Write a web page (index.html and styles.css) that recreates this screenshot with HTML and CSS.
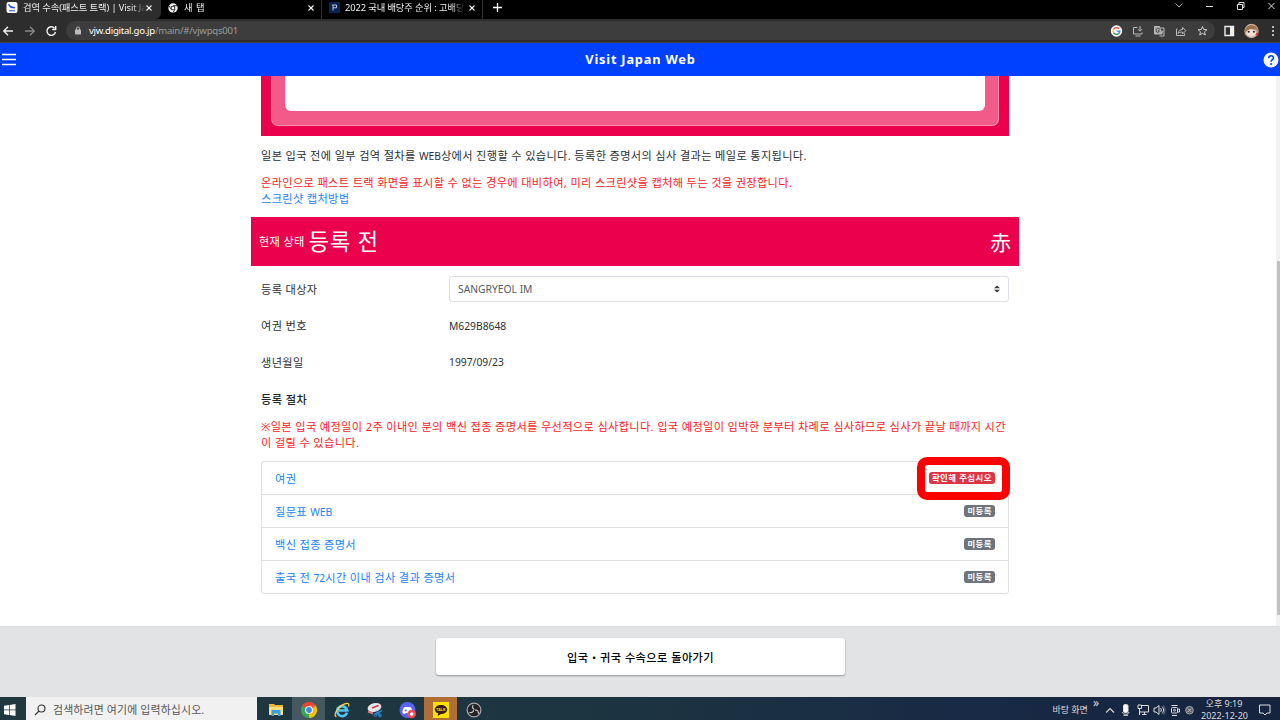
FILE: index.html
```html
<!DOCTYPE html>
<html lang="ko">
<head>
<meta charset="utf-8">
<title>Visit Japan Web</title>
<link rel="stylesheet" href="styles.css">
</head>
<body>
<div class="tabs">
  <div class="tab tab-active">
    <svg class="fav" width="12" height="12" viewBox="0 0 12 12"><rect x=".5" width="11" height="11" rx="2" fill="#fff"/><path d="M2.500 2.500l2 2 4.500 1.300-4-.3z" fill="#1456d8" stroke="#1456d8" stroke-width="1.200"/><path d="M3 8.800h6" stroke="#1456d8"/></svg>
    <span class="tab-text t1">검역 수속(패스트 트랙) | Visit Ja</span>
    <svg class="x" viewBox="0 0 6 6"><path d="M.5.5l5 5M5.500.5l-5 5"/></svg>
  </div>
  <div class="tab tab-two">
    <svg class="fav" width="10" height="10" viewBox="0 0 10 10"><circle cx="5" cy="5" r="4.700" fill="#eee"/><path d="M5 2.700h4.200M3 6.100L1 2.700M7 6.100L5 9.600" stroke="#111" stroke-width=".8"/><circle cx="5" cy="5" r="2.300" fill="#111"/><circle cx="5" cy="5" r="1.500" fill="#fff"/></svg>
    <span class="tab-text t2">새 탭</span>
    <svg class="x" viewBox="0 0 6 6"><path d="M.5.5l5 5M5.500.5l-5 5"/></svg>
  </div>
  <div class="tab tab-three">
    <svg class="fav" width="11" height="11" viewBox="0 0 11 11"><rect width="11" height="11" fill="#0a2354"/><path d="M4 8.500V3M3 3h4.500v2.800H4" fill="none" stroke="#b9c4d6"/></svg>
    <span class="tab-text t3">2022 국내 배당주 순위 : 고배당</span>
    <svg class="x" viewBox="0 0 6 6"><path d="M.5.5l5 5M5.500.5l-5 5"/></svg>
  </div>
  <svg class="plus" width="9" height="9" viewBox="0 0 9 9"><path d="M4.500 0v9M0 4.500h9" stroke="#fff" stroke-width="1.300"/></svg>
  <svg class="winctl" width="100" height="12" viewBox="0 0 100 12" fill="none" stroke="#ddd"><path d="M.5 3.500l3.500 3.500L7.500 3.500" stroke="#aaa"/><path d="M31 6.500h7"/><path d="M62.500 4.500h5v5h-5zM64 4V2.500h5v5h-1.500"/><path d="M93.500 3l6 6M99.500 3l-6 6"/></svg>
</div>
<div class="toolbar">
  <svg class="nav" width="58" height="14" viewBox="0 0 58 14" fill="none" stroke="#f1f1f1" stroke-width="1.400"><path d="M13 7H4M8 2.800L3.800 7 8 11.200"/><path d="M25 7h9M30 2.800L34.200 7 30 11.200" stroke="#85878a"/><path d="M54.500 4.200A4.300 4.300 0 1 0 55.500 8M55.700 2v3.500h-3.500"/></svg>
  <div class="omni">
    <svg width="8" height="9" viewBox="0 0 8 9"><rect x="1" y="3.500" width="6" height="5" rx=".7" fill="#bbb"/><path d="M2.500 4V2.500a1.500 1.500 0 0 1 3 0V4" fill="none" stroke="#bbb"/></svg>
    <span class="url"><b>vjw.digital.go.jp</b>/main/#/vjwpqs001</span>
    <svg class="omni-icons" width="100" height="14" viewBox="0 0 100 14" fill="none" stroke="#bbb">
      <circle cx="6.500" cy="7" r="5.700" fill="#fff" stroke="none"/><path d="M9 4.700A3.300 3.300 0 0 0 3.800 5.200" stroke="#ea4335" stroke-width="1.400"/><path d="M3.700 5.200a3.300 3.300 0 0 0 0 3.600" stroke="#fbbc04" stroke-width="1.400"/><path d="M3.700 8.800a3.300 3.300 0 0 0 4.800.8" stroke="#34a853" stroke-width="1.400"/><path d="M6.500 7.100h3.300a3.300 3.300 0 0 1-1.300 2.500" stroke="#4285f4" stroke-width="1.400"/>
      <path d="M27.500 3.500H23.500v6.500h8.500V8.500M25.500 12h5M30 2v5M28 5.200l2 2 2-2"/>
      <path d="M44.500 2.500h5l2.500 7.500h-7.500z" fill="#aaa"/><path d="M50.500 4h3.500v8h-4.500"/><path d="M50 5.800A2 2 0 1 0 49 8V6.500h-1" stroke="#3d3d3d" stroke-width=".8"/><path d="M51.500 7h2M53 7l-1 2.500" stroke-width=".8"/>
      <path d="M67.500 5h-1v6.500h8v-2M68 9.500c.5-3 2.500-4 4.500-4V3.300l3.300 3.400-3.300 3.300V8c-2 0-3.500.4-4.500 1.500z"/>
      <path d="M92.500 2.500l1.200 3 3.300.2-2.500 2.100.8 3.200-2.800-1.700-2.800 1.700.8-3.200L88 5.700l3.300-.2z" stroke="#ccc"/>
    </svg>
  </div>
  <svg class="right-icons" width="56" height="16" viewBox="0 0 56 16"><path d="M5 3.500h8.500v9H5z" fill="none" stroke="#eee" stroke-width="1.400"/><path d="M10 3h4v10h-4z" fill="#eee"/><circle cx="31.500" cy="8" r="7.200" fill="#c8ab92"/><path d="M25 9c-.5-9 13.500-9 13 0l-2-3-3 .7-4-.2z" fill="#98714f"/><ellipse cx="31.300" cy="10" rx="5" ry="3.700" fill="#f2dfd4"/><circle cx="28.700" cy="8.800" r="1" fill="#33221f"/><circle cx="33.900" cy="8.800" r="1" fill="#33221f"/><path d="M36 12l2-2" stroke="#d33" stroke-width="2"/><g fill="#eee"><circle cx="53" cy="4" r="1"/><circle cx="53" cy="8" r="1"/><circle cx="53" cy="12" r="1"/></g></svg>
</div>
<header class="site-head">
  <svg width="16" height="14" viewBox="0 0 16 14"><path d="M2 1.500h14M2 6.500h14M2 11.500h14" stroke="#fff" stroke-width="1.300"/></svg>
  <h1>Visit Japan Web</h1>
  <svg width="17" height="16" viewBox="0 0 17 16"><circle cx="8" cy="8" r="7.500" fill="#fff"/><path d="M5.700 6.200C5.700 3 10.500 3 10.500 6c0 1.700-2.400 1.800-2.400 3.700" fill="none" stroke="#0041ff" stroke-width="1.600"/><circle cx="8.100" cy="11.900" r="1" fill="#0041ff"/></svg>
</header>
<div class="viewport">
  <main class="page">
    <div class="qr"><div class="qr-mid"><div class="qr-in"></div></div></div>
    <p class="p1">일본 입국 전에 일부 검역 절차를 <span class="lat">WEB</span>상에서 진행할 수 있습니다. 등록한 증명서의 심사 결과는 메일로 통지됩니다.</p>
    <p class="p2 red">온라인으로 패스트 트랙 화면을 표시할 수 없는 경우에 대비하여, 미리 스크린샷을 캡처해 두는 것을 권장합니다.<br><a>스크린샷 캡처방법</a></p>
    <div class="status"><span class="st-label">현재 상태</span><span class="st-val">등록 전</span><span class="st-color">赤</span></div>
    <div class="row first"><span class="lab">등록 대상자</span><div class="select"><span class="lat">SANGRYEOL IM</span><svg width="6" height="8" viewBox="0 0 6 8"><path d="M0 3.300L3 .5l3 2.800zM0 4.700L3 7.500l3-2.800z" fill="#343a40"/></svg></div></div>
    <div class="row"><span class="lab">여권 번호</span><span class="lat">M629B8648</span></div>
    <div class="row"><span class="lab">생년월일</span><span class="lat">1997/09/23</span></div>
    <div class="row"><span class="lab strong">등록 절차</span></div>
    <p class="p3 red">※일본 입국 예정일이 2주 이내인 분의 백신 접종 증명서를 우선적으로 심사합니다. 입국 예정일이 임박한 분부터 차례로 심사하므로 심사가 끝날 때까지 시간<br>이 걸릴 수 있습니다.</p>
    <div class="list">
      <div class="item"><a>여권</a><span class="badge danger">확인해 주십시오</span><span class="mark"></span></div>
      <div class="item"><a>질문표 <span class="lat">WEB</span></a><span class="badge">미등록</span></div>
      <div class="item"><a>백신 접종 증명서</a><span class="badge">미등록</span></div>
      <div class="item"><a>출국 전 <span class="lat">72</span>시간 이내 검사 결과 증명서</a><span class="badge">미등록</span></div>
    </div>
  </main>
  <div class="scroll"><div class="thumb"></div></div>
</div>
<footer class="foot"><div class="btn">입국・귀국 수속으로 돌아가기</div></footer>
<div class="taskbar">
  <div class="start"><svg width="12" height="12" viewBox="0 0 12 12" fill="#fff"><path d="M0 1.700l5-.7v4.600H0zM5.700.9L11.500 0v5.600H5.700zM0 6.300h5V11l-5-.7zM5.700 6.300h5.800V12l-5.800-.9z"/></svg></div>
  <div class="search"><svg width="12" height="12" viewBox="0 0 12 12" fill="none" stroke="#333" stroke-width="1.100"><circle cx="7.500" cy="4.500" r="3.500"/><path d="M5 7L1 11"/></svg><span>검색하려면 여기에 입력하십시오.</span></div>
  <div class="apps">
    <div class="app"><svg width="18" height="16" viewBox="0 0 18 16"><path d="M2 2h5l1 1h8v10H2z" fill="#f0b73c"/><path d="M2 5h14v8H2z" fill="#fcdc7c"/><path d="M4.500 8h9v6h-2.500v-2.500h-4V14H4.500z" fill="#39a0e0"/></svg></div>
    <div class="app on"><svg width="16" height="16" viewBox="0 0 16 16"><circle cx="8" cy="8" r="8" fill="#34a853"/><path d="M8 8L1.070 4A8 8 0 0 1 14.930 4z" fill="#ea4335"/><path d="M8 8l6.930-4A8 8 0 0 1 8 16z" fill="#fbbc04"/><path d="M8 4h6.900" stroke="#fbbc04" stroke-width=".5"/><circle cx="8" cy="8" r="3.900" fill="#fff"/><circle cx="8" cy="8" r="2.900" fill="#4285f4"/></svg></div>
    <div class="app"><svg width="18" height="16" viewBox="0 0 18 16" fill="none"><path d="M14 10.700A5 5 0 1 1 14.200 8.500H5" stroke="#52c4f3" stroke-width="2.700"/><path d="M3.500 14.500C-1 14 6 3 13 1.500c2.500-.5 3.500.6 2.500 3" stroke="#f5ce43" stroke-width="1.300"/></svg></div>
    <div class="app"><svg width="18" height="16" viewBox="0 0 18 16"><ellipse cx="8.500" cy="5.500" rx="7" ry="4.300" fill="#e6e5e8" transform="rotate(-15 8.500 5.500)"/><path d="M6 6L12.500 3.500" stroke="#cf3548" stroke-width="1.500"/><path d="M2 9.500l5 2" stroke="#d57983" stroke-width="2"/><path d="M9 12.500l7-4M10 9l4.500 5" stroke="#2687c9" stroke-width="1.500"/><g fill="none" stroke="#2687c9"><circle cx="9.500" cy="13" r="1.500"/><circle cx="14" cy="13.500" r="1.500"/></g></svg></div>
    <div class="app"><svg width="18" height="17" viewBox="0 0 18 17"><circle cx="8.500" cy="8" r="8" fill="#5865f2"/><path d="M3.500 11.300C3.200 8 4.500 5.500 5.700 5h5.600c1.500 1 2.500 4 2.200 6.300l-2.500.7-.7-1H6.700l-.7 1z" fill="#fff"/><circle cx="6.800" cy="8.500" r="1" fill="#5865f2"/><circle cx="12.700" cy="12" r="4.300" fill="#ef4e50"/><circle cx="12.700" cy="12" r="1.800" fill="#fff"/></svg></div>
    <div class="app talk"><svg width="16" height="16" viewBox="0 0 16 16"><rect width="16" height="16" fill="#fae100"/><path d="M8 3c3.500 0 6.200 2 6.200 4.500S11.500 12 8 12l-3.300 2 .5-2.600C3 10.700 1.800 9.200 1.800 7.500 1.800 5 4.500 3 8 3z" fill="#371d1e"/><text x="8" y="9.200" class="talk-text">TALK</text></svg></div>
    <div class="app"><svg width="16" height="16" viewBox="0 0 16 16"><circle cx="8" cy="8" r="6.900" fill="#252328" stroke="#aaa" stroke-width="1.200"/><g fill="none" stroke="#c9c9cb" stroke-width="1.200"><path d="M7.200 3c-1.700 2.500 0 4.300 1.300 4.500M3.400 10.500c3 .6 4.200-1 4.100-2.300M12.500 11.700c.2-3-1.700-4-3.300-3.300"/></g></svg></div>
  </div>
  <div class="tray"><span class="desk">바탕 화면</span><span class="more">»</span>
    <svg class="tray-icons" width="88" height="14" viewBox="0 0 88 14" fill="none" stroke="#ddd"><path d="M0 9.500l4-4 4 4" stroke-width="1.200"/><rect x="17.500" y="1.500" width="4.500" height="8" rx="1.500" fill="#fff"/><path d="M16.500 9c0 3 6.500 3 6.500 0M17.500 12.300h4.500"/><path d="M36 2.500h6.500v6.500H34M32 2h3.500v3.500H32zM33.500 5.500v6.500M36 11.500h4.500M38.500 9v2.500"/><path d="M48 5h2l3-2.500v9L50 9h-2zM54.500 5c1 1 1 3 0 4M56 3.500c2 2 2 5 0 7"/><path d="M57.500 2.500c2 2.500 2 6.500 0 9" stroke="#78818f"/><rect x="65.500" y="4.500" width="6" height="5.500" rx="1"/><circle cx="68.500" cy="7.200" r="1"/><path d="M65.500 2.500h6M66 12.500h5M72 6h1.500v3H72"/><circle cx="83.500" cy="7.200" r="3.800" fill="#555c6a" stroke="#aaa"/><path d="M81.700 5.400l3.600 3.600M85.300 5.400L81.700 9" stroke="#bbb"/></svg>
    <div class="clock"><div>오후 9:19</div><div>2022-12-20</div></div>
    <svg width="12" height="12" viewBox="0 0 12 12" fill="none" stroke="#ddd"><path d="M.5 1h10.500v8H8l-2 2-2-2H.5z"/></svg>
  </div>
</div>
</body>
</html>
```

FILE: styles.css
```css
* { box-sizing: border-box; }
body { margin: 0; width: 1280px; height: 720px; overflow: hidden; display: flex; flex-direction: column; background: #fff; color: #2b3035; font-family: "Noto Sans", "Noto Sans CJK KR", sans-serif; font-size: 11.2px; line-height: 16px; white-space: nowrap; }
svg { display: block; flex: none; }
p, h1 { margin: 0; }
a { color: #1a82ff; }
.tabs { height: 19px; background: #000; display: flex; align-items: flex-start; }
.tab { height: 19px; display: flex; align-items: center; padding: 0 9px 4px 6px; color: #eee; font-size: 9.3px; line-height: 14px; }
.tab-active { width: 161px; background: #2d2d2d; border-radius: 0 0 6px 0; }
.tab-active .x { margin-left: -4px; }
.tab-two { width: 161px; padding-right: 7px; border-right: 1px solid #333; padding-left: 7px; }
.tab-three { width: 161px; padding-left: 7px; padding-right: 7px; border-right: 1px solid #333; }
.tab-text { flex: 1; margin: 0 4px 0 5px; -webkit-mask-image: linear-gradient(90deg, #000 88%, transparent); mask-image: linear-gradient(90deg, #000 88%, transparent); }
.t2 { letter-spacing: .5px; margin-left: 6px; }
.t1 { letter-spacing: -.1px; }
.t3 { letter-spacing: -.1px; }
.x { width: 6px; height: 6px; stroke: #fff; stroke-width: 1.1; }
.plus { margin: 3px 0 0 10px; }
.winctl { margin-left: auto; margin-right: 5px; overflow: visible; }
.toolbar { height: 24px; background: #2d2d2d; border-bottom: 1px solid #444; display: flex; align-items: center; }
.omni { margin-left: 8px; width: 1149px; height: 19px; border-radius: 10px; background: #3d3d3d; display: flex; align-items: center; padding: 0 5px 0 8px; }
.url { margin-left: 7px; font-size: 9.6px; letter-spacing: -.26px; color: #9c9c9c; }
.url b { color: #fff; font-weight: 400; }
.omni-icons { margin-left: auto; }
.right-icons { margin-left: 5px; }
.site-head { height: 33px; background: #0041ff; color: #fff; display: flex; align-items: center; justify-content: space-between; }
.site-head h1 { font-size: 12.8px; font-weight: 700; letter-spacing: .8px; line-height: 20px; padding: 0 0 2px 2px; }
.viewport { height: 550px; display: flex; justify-content: flex-end; overflow: hidden; }
.page { width: 768px; padding: 0 10px; margin-right: 257px; }
.scroll { width: 4px; background: #f1f1f1; padding: 185px 0 0 1px; }
.thumb { height: 354px; background: #c1c1c1; }
.qr { height: 60px; width: 748px; background: #ea004c; padding: 0 10px 10px; }
.qr-mid { height: 50px; background: #f25a8a; border: 1px solid #f78fb0; border-top: 0; border-radius: 0 0 7px 7px; padding: 0 13px; }
.qr-in { height: 35px; background: #fff; border-radius: 0 0 6px 6px; }
.p1, .p2, .p3, .lab, .item a { letter-spacing: .35px; }
.p1 { margin-top: 12px; }
.p2 { margin-top: 11px; }
.red { color: #ff1a1a; }
.lat { font-size: 10.3px; letter-spacing: 0; }
.status { height: 48.5px; margin: 10px -10px 0; background: #ea004c; color: #fff; display: flex; align-items: center; padding: 0 8px; }
.st-label { letter-spacing: .3px; padding-top: 1px; }
.st-val { font-size: 22.4px; margin-left: 4px; line-height: 32px; letter-spacing: .6px; padding-top: 1px; }
.st-color { margin-left: auto; font-family: "Noto Sans CJK JP", sans-serif; font-size: 21px; line-height: 32px; }
.row { height: 36.5px; display: grid; grid-template-columns: 188px 560px; align-items: center; }
.first { margin-top: 5.5px; }
.lab { padding-top: 1px; }
.strong { font-weight: 500; font-family: "Noto Sans CJK KR", sans-serif; color: #212529; padding-top: 0; }
.select { height: 26px; border: 1px solid #dadfe5; border-radius: 3px; display: flex; align-items: center; justify-content: space-between; padding: 0 8px; color: #555c63; }
.p3 { margin-top: 2px; }
.list { margin-top: 10px; border: 1px solid #dfdfdf; border-radius: 3px; }
.item { position: relative; height: 33px; display: flex; align-items: center; justify-content: space-between; padding: 0 13px; }
.item a { padding-top: 1px; }
.item:first-child { height: 32px; z-index: 1; }
.item + .item { border-top: 1px solid #dfdfdf; }
.badge { height: 12px; line-height: 12px; padding: 0 3px; border-radius: 3px; background: #6c757d; color: #fff; font-size: 8.4px; font-weight: 700; letter-spacing: .5px; }
.danger { background: #dc3545; }
.mark { position: absolute; right: -2px; top: -5px; width: 93px; height: 43px; border: 8px solid #f00; border-radius: 10px; }
.foot { height: 71px; background: #e2e3e5; padding: 11px 0 0 1px; display: flex; justify-content: center; border-top: 1px solid #dcddde; }
.btn { width: 409px; height: 37px; border-radius: 3px; background: #fff; box-shadow: 0 1px 2px rgba(0,0,0,.35); font: 500 11.2px/38px "Noto Sans CJK KR", sans-serif; letter-spacing: .4px; text-align: center; color: #000; }
.taskbar { height: 23px; display: flex; background: linear-gradient(90deg, #203840, #1d3540 45%, #182a45 75%, #16233f); color: #ddd; }
.start { width: 26px; padding: 7px 0 0 4px; }
.search { width: 231px; background: #f1f1f1; color: #555; display: flex; align-items: center; padding: 3px 8px 0; gap: 7px; font-size: 10.9px; letter-spacing: .15px; }
.apps { display: flex; padding-left: 2px; }
.app { width: 33px; height: 23px; display: flex; justify-content: center; padding-top: 5px; }
.on { background: #455860; }
.talk { background: #b06d35; }
.talk-text { font: 700 3.6px "Liberation Sans", sans-serif; fill: #fae100; text-anchor: middle; }
.tray { margin-left: auto; display: flex; align-items: center; padding: 3px 9px 0 0; }
.desk { font-size: 9px; }
.more { font-size: 12px; margin: -14px 7px 0 5px; }
.tray-icons { margin-right: -4px; }
.clock { width: 46px; margin: -1px 12px 0 11px; font-size: 9px; line-height: 12px; text-align: center; }
```
